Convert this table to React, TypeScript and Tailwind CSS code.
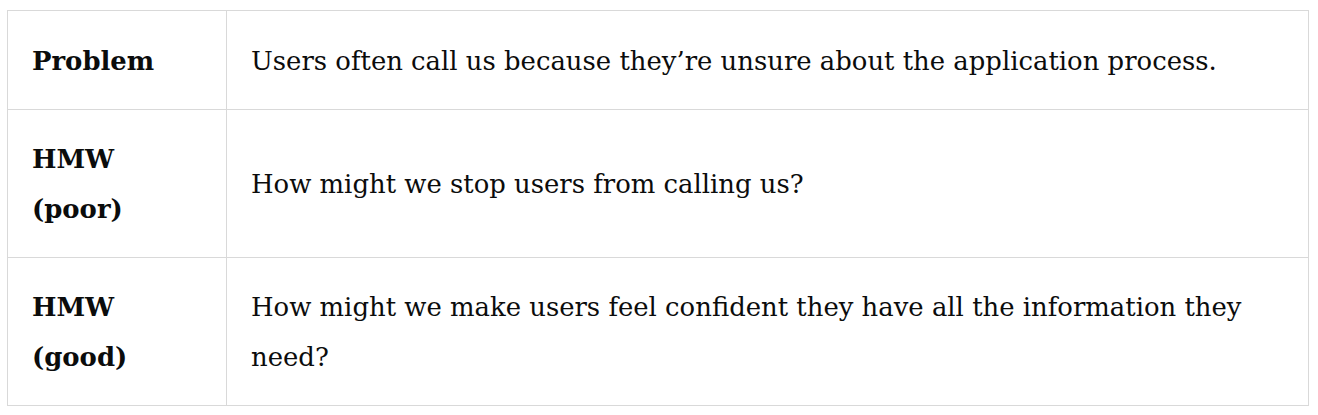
import React from "react";

const rows: { h: React.ReactNode; d: string }[] = [
  { h: "Problem", d: "Users often call us because they’re unsure about the application process." },
  { h: <>HMW<br />(poor)</>, d: "How might we stop users from calling us?" },
  { h: <>HMW<br />(good)</>, d: "How might we make users feel confident they have all the information they need?" },
];

export default function App() {
  return (
    <div className="bg-white w-[1318px] h-[415px] pl-[7px] pt-[10px]">
      <table className="w-[1302px] border-collapse text-[#0b0c0c] font-['DejaVu_Serif',serif] text-[25.9px] leading-[49.5px]">
        <tbody>
          {rows.map((r, i) => (
            <tr key={i}>
              <th className="w-[219px] border border-[#d9d9d9] px-6 pt-[25.5px] pb-[22.5px] text-left align-middle font-bold">{r.h}</th>
              <td className="border border-[#d9d9d9] px-6 pt-[25.5px] pb-[22.5px] align-middle">{r.d}</td>
            </tr>
          ))}
        </tbody>
      </table>
    </div>
  );
}
